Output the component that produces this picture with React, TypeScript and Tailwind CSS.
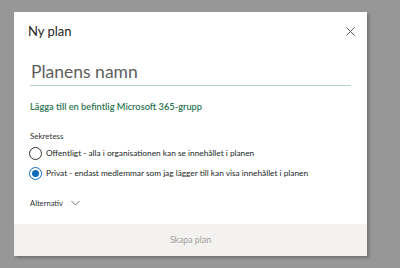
const font = { fontFamily: 'Lato, "Noto Sans", sans-serif' };

function Radio({ checked, label }: { checked?: boolean; label: string }) {
  return (
    <label className="flex h-[14px] items-center gap-[4px] text-[8.3px] text-[#201f1e]">
      <span
        className={
          "flex h-[13px] w-[13px] shrink-0 items-center justify-center rounded-full border " +
          (checked ? "border-[#0f6cbd]" : "border-[#323130]")
        }
      >
        {checked && <span className="h-[7px] w-[7px] rounded-full bg-[#0f6cbd]" />}
      </span>
      <span className="whitespace-nowrap">{label}</span>
    </label>
  );
}

export default function App() {
  return (
    <div className="h-[268px] w-[400px] bg-[#979797] pl-[14px] pt-[12px]" style={font}>
      <div className="flex h-[244px] w-[353px] flex-col bg-white shadow-[2px_2px_3px_rgba(0,0,0,0.25)]">
        <div className="flex items-center justify-between pl-[14px] pr-[12px] pt-[10px]">
          <h1 className="text-[13px] leading-[18px] text-[#252423]">Ny plan</h1>
          <svg width="9" height="9" viewBox="0 0 9 9" className="text-[#605e5c]">
            <path d="M0.5 0.5 L8.5 8.5 M8.5 0.5 L0.5 8.5" stroke="currentColor" strokeWidth="1" />
          </svg>
        </div>

        <div className="mx-[16px] mt-[21px] border-b-[1.5px] border-[#b3d5c4] pb-[1.5px] pl-[1px] text-[17.5px] leading-[22px] text-[#605e5c]">
          Planens namn
        </div>

        <a className="ml-[16px] mt-[15px] text-[9.25px] font-semibold leading-[12px] text-[#2b7452]">
          Lägga till en befintlig Microsoft 365-grupp
        </a>

        <p className="ml-[16px] mt-[18px] text-[8px] leading-[11px] text-[#323130]">Sekretess</p>

        <div className="ml-[15px] mt-[5px] flex flex-col gap-[6px]">
          <Radio label="Offentligt - alla i organisationen kan se innehållet i planen" />
          <Radio checked label="Privat - endast medlemmar som jag lägger till kan visa innehållet i planen" />
        </div>

        <div className="ml-[16px] mt-[16px] flex items-center gap-[8px] text-[7.6px] leading-[12px] text-[#323130]">
          <span>Alternativ</span>
          <svg width="9" height="6" viewBox="0 0 9 6" className="text-[#605e5c]">
            <path d="M0.5 1 L4.5 5 L8.5 1" fill="none" stroke="currentColor" strokeWidth="0.9" />
          </svg>
        </div>

        <div className="mt-auto flex h-[32px] items-center justify-center bg-[#f3f2f1]">
          <span className="text-[8.75px] text-[#a19f9d]">Skapa plan</span>
        </div>
      </div>
    </div>
  );
}
